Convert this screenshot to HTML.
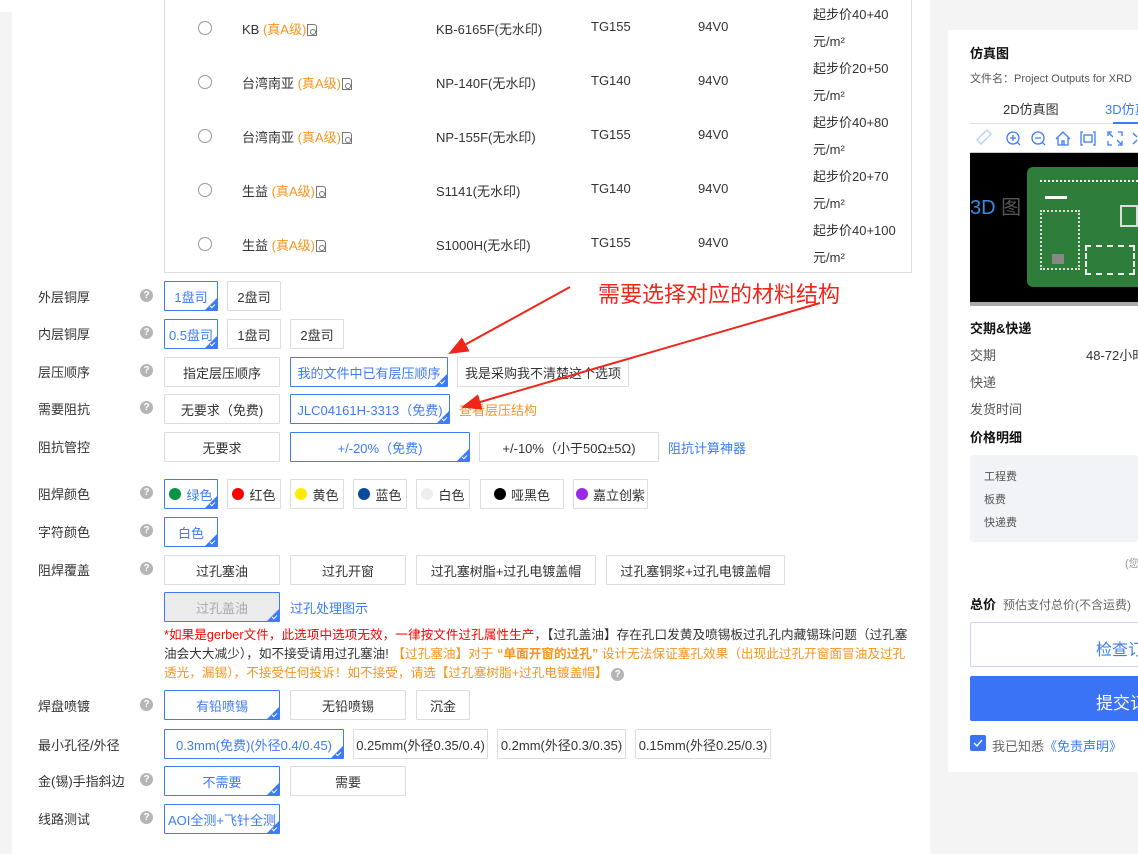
<!DOCTYPE html>
<html><head><meta charset="utf-8">
<style>
*{margin:0;padding:0;box-sizing:border-box}
body{width:1138px;height:854px;position:relative;overflow:hidden;background:#fff;font-family:"Liberation Sans","Noto Sans CJK SC",sans-serif;font-size:13px;color:#333}
.a{position:absolute;white-space:nowrap}
.b{position:absolute;height:30px;border:1px solid #dcdcdc;background:#fff;display:flex;align-items:center;justify-content:center;font-size:13px;color:#333;border-radius:1px}
.s{border-color:#3d7bf7;color:#3d7bf7}
.s::after{content:"";position:absolute;right:0;bottom:0;border-style:solid;border-width:0 0 12px 12px;border-color:transparent transparent #3d7bf7 transparent}
.s::before{content:"";position:absolute;right:2px;bottom:3px;width:4px;height:2px;border-left:1px solid #fff;border-bottom:1px solid #fff;transform:rotate(-45deg);z-index:2}
.l{position:absolute;left:38px;font-size:13px;color:#333}
.q{position:absolute;left:140px;width:13px;height:13px;border-radius:50%;background:#b5b5b5;color:#fff;font-size:10px;font-weight:bold;text-align:center;line-height:13px}
.r{position:absolute;left:198px;width:14px;height:14px;border:1px solid #999;border-radius:50%}
.or{color:#f7941d}
.dot{display:inline-block;width:12px;height:12px;border-radius:50%;margin-right:5px}
.pdf{display:inline-block;width:10px;height:12px;border:1px solid #777;border-top-right-radius:3px;margin-left:1px;vertical-align:-2px;position:relative}
.pdf::after{content:"";position:absolute;left:2px;top:4px;width:4px;height:4px;border:1px solid #777;border-radius:50%}
</style></head><body>
<div class="a" style="left:0;top:12px;width:12px;height:842px;background:#f4f4f4"></div>
<div class="a" style="left:930px;top:0;width:18px;height:854px;background:#f4f4f4"></div>
<div class="a" style="left:948px;top:0;width:190px;height:30px;background:#f4f4f4"></div>
<div class="a" style="left:948px;top:772px;width:190px;height:82px;background:#f4f4f4"></div>
<!-- table -->
<div class="a" style="left:164px;top:0;width:748px;height:273px;border:1px solid #ddd;border-top:none"></div>
<div class="r" style="top:21px"></div><div class="r" style="top:75px"></div><div class="r" style="top:129px"></div><div class="r" style="top:183px"></div><div class="r" style="top:237px"></div>
<div class="a" style="left:242px;top:19px">KB <span class="or">(真A级)</span><span class="pdf"></span></div>
<div class="a" style="left:242px;top:73px">台湾南亚 <span class="or">(真A级)</span><span class="pdf"></span></div>
<div class="a" style="left:242px;top:127px">台湾南亚 <span class="or">(真A级)</span><span class="pdf"></span></div>
<div class="a" style="left:242px;top:181px">生益 <span class="or">(真A级)</span><span class="pdf"></span></div>
<div class="a" style="left:242px;top:235px">生益 <span class="or">(真A级)</span><span class="pdf"></span></div>
<div class="a" style="left:436px;top:19px">KB-6165F(无水印)</div>
<div class="a" style="left:436px;top:73px">NP-140F(无水印)</div>
<div class="a" style="left:436px;top:127px">NP-155F(无水印)</div>
<div class="a" style="left:436px;top:181px">S1141(无水印)</div>
<div class="a" style="left:436px;top:235px">S1000H(无水印)</div>
<div class="a" style="left:591px;top:19px">TG155</div><div class="a" style="left:591px;top:73px">TG140</div><div class="a" style="left:591px;top:127px">TG155</div><div class="a" style="left:591px;top:181px">TG140</div><div class="a" style="left:591px;top:235px">TG155</div>
<div class="a" style="left:698px;top:19px">94V0</div><div class="a" style="left:698px;top:73px">94V0</div><div class="a" style="left:698px;top:127px">94V0</div><div class="a" style="left:698px;top:181px">94V0</div><div class="a" style="left:698px;top:235px">94V0</div>
<div class="a" style="left:813px;top:1px;line-height:27px">起步价40+40<br>元/m²<br>起步价20+50<br>元/m²<br>起步价40+80<br>元/m²<br>起步价20+70<br>元/m²<br>起步价40+100<br>元/m²</div>
<div class="a" style="left:813px;top:0;width:98px;height:6px;background:#fff"></div>

<!-- labels -->
<div class="l" style="top:287px">外层铜厚</div><div class="q" style="top:289px">?</div>
<div class="l" style="top:324px">内层铜厚</div><div class="q" style="top:326px">?</div>
<div class="l" style="top:362px">层压顺序</div><div class="q" style="top:364px">?</div>
<div class="l" style="top:399px">需要阻抗</div><div class="q" style="top:401px">?</div>
<div class="l" style="top:437px">阻抗管控</div>
<div class="l" style="top:484px">阻焊颜色</div><div class="q" style="top:486px">?</div>
<div class="l" style="top:522px">字符颜色</div><div class="q" style="top:524px">?</div>
<div class="l" style="top:560px">阻焊覆盖</div><div class="q" style="top:562px">?</div>
<div class="l" style="top:696px">焊盘喷镀</div><div class="q" style="top:698px">?</div>
<div class="l" style="top:735px">最小孔径/外径</div>
<div class="l" style="top:771px">金(锡)手指斜边</div><div class="q" style="top:773px">?</div>
<div class="l" style="top:809px">线路测试</div><div class="q" style="top:811px">?</div>

<div class="b s" style="left:164px;top:281px;width:54px">1盘司</div>
<div class="b" style="left:227px;top:281px;width:54px">2盘司</div>
<div class="b s" style="left:164px;top:319px;width:54px">0.5盘司</div>
<div class="b" style="left:227px;top:319px;width:54px">1盘司</div>
<div class="b" style="left:290px;top:319px;width:54px">2盘司</div>
<div class="b" style="left:164px;top:357px;width:116px">指定层压顺序</div>
<div class="b s" style="left:290px;top:357px;width:158px">我的文件中已有层压顺序</div>
<div class="b" style="left:457px;top:357px;width:172px">我是采购我不清楚这个选项</div>
<div class="b" style="left:164px;top:394px;width:116px">无要求（免费)</div>
<div class="b s" style="left:290px;top:394px;width:160px">JLC04161H-3313（免费)</div>
<div class="a or" style="left:459px;top:400px">查看层压结构</div>
<div class="b" style="left:164px;top:432px;width:116px">无要求</div>
<div class="b s" style="left:290px;top:432px;width:180px">+/-20%（免费)</div>
<div class="b" style="left:479px;top:432px;width:180px">+/-10%（小于50Ω±5Ω)</div>
<div class="a" style="left:668px;top:438px;color:#3d7bf7">阻抗计算神器</div>

<div class="b s" style="left:164px;top:479px;width:54px"><span class="dot" style="background:#079345"></span>绿色</div>
<div class="b" style="left:227px;top:479px;width:54px"><span class="dot" style="background:#f00"></span>红色</div>
<div class="b" style="left:290px;top:479px;width:54px"><span class="dot" style="background:#ffea00"></span>黄色</div>
<div class="b" style="left:353px;top:479px;width:54px"><span class="dot" style="background:#0b4a9b"></span>蓝色</div>
<div class="b" style="left:416px;top:479px;width:54px"><span class="dot" style="background:#eee"></span>白色</div>
<div class="b" style="left:480px;top:479px;width:84px"><span class="dot" style="background:#000"></span>哑黑色</div>
<div class="b" style="left:573px;top:479px;width:75px"><span class="dot" style="background:#9b27e8"></span>嘉立创紫</div>
<div class="b s" style="left:164px;top:517px;width:54px">白色</div>

<div class="b" style="left:164px;top:555px;width:116px">过孔塞油</div>
<div class="b" style="left:290px;top:555px;width:116px">过孔开窗</div>
<div class="b" style="left:416px;top:555px;width:180px">过孔塞树脂+过孔电镀盖帽</div>
<div class="b" style="left:606px;top:555px;width:179px">过孔塞铜浆+过孔电镀盖帽</div>
<div class="b s" style="left:164px;top:592px;width:116px;background:#ebebeb;border-color:#3d7bf7;color:#aaa">过孔盖油</div>
<div class="a" style="left:290px;top:598px;color:#3d7bf7">过孔处理图示</div>
<div class="a" style="left:164px;top:626px;line-height:19px;white-space:normal;width:748px;font-size:12.6px;letter-spacing:0.05px"><span style="color:#f00">*如果是gerber文件，此选项中选项无效，一律按文件过孔属性生产，</span>【过孔盖油】存在孔口发黄及喷锡板过孔孔内藏锡珠问题（过孔塞油会大大减少），如不接受请用过孔塞油! <span class="or">【过孔塞油】对于 <b>“单面开窗的过孔”</b> 设计无法保证塞孔效果（出现此过孔开窗面冒油及过孔透光，漏锡），不接受任何投诉！如不接受，请选【过孔塞树脂+过孔电镀盖帽】</span> <span style="display:inline-block;width:13px;height:13px;border-radius:50%;background:#b5b5b5;color:#fff;font-size:10px;text-align:center;line-height:13px;font-weight:bold">?</span></div>

<div class="b s" style="left:164px;top:690px;width:116px">有铅喷锡</div>
<div class="b" style="left:290px;top:690px;width:116px">无铅喷锡</div>
<div class="b" style="left:416px;top:690px;width:54px">沉金</div>
<div class="b s" style="left:164px;top:729px;width:180px">0.3mm(免费)(外径0.4/0.45)</div>
<div class="b" style="left:353px;top:729px;width:135px">0.25mm(外径0.35/0.4)</div>
<div class="b" style="left:497px;top:729px;width:129px">0.2mm(外径0.3/0.35)</div>
<div class="b" style="left:635px;top:729px;width:136px">0.15mm(外径0.25/0.3)</div>
<div class="b s" style="left:164px;top:766px;width:116px">不需要</div>
<div class="b" style="left:290px;top:766px;width:116px">需要</div>
<div class="b s" style="left:164px;top:804px;width:116px">AOI全测+飞针全测</div>

<!-- annotation -->
<svg class="a" style="left:0;top:0" width="930" height="854">
<defs><marker id="m" markerWidth="10" markerHeight="8" refX="9" refY="4" orient="auto"><path d="M0,0 L10,4 L0,8 z" fill="#f0261b"/></marker></defs>
<line x1="570" y1="287" x2="450" y2="353" stroke="#f0261b" stroke-width="2" marker-end="url(#m)"/>
<line x1="820" y1="303" x2="463" y2="407" stroke="#f0261b" stroke-width="2" marker-end="url(#m)"/>
</svg>
<div class="a" style="left:598px;top:277px;font-size:22px;color:#f0261b">需要选择对应的材料结构</div>

<!-- right panel -->
<div class="a" style="left:970px;top:43px;font-size:13px;font-weight:bold;color:#111">仿真图</div>
<div class="a" style="left:970px;top:70px;font-size:11px;color:#555">文件名：Project Outputs for XRD</div>
<div class="a" style="left:1003px;top:99px;font-size:13px;color:#333">2D仿真图</div>
<div class="a" style="left:1105px;top:99px;font-size:13px;color:#3d7bf7">3D仿真</div>
<div class="a" style="left:970px;top:123px;width:168px;height:1px;background:#ddd"></div>
<div class="a" style="left:1113px;top:122px;width:25px;height:2px;background:#3d7bf7"></div>
<svg class="a" style="left:975px;top:128px" width="163" height="22" fill="none" stroke="#3d7bf7" stroke-width="1.3">
<g stroke="#b8d0f8"><rect x="6" y="2" width="6" height="14" transform="rotate(45 9 9)"/></g>
<circle cx="38" cy="10" r="6"/><path d="M35 10h6M38 7v6M42 14l3 3"/>
<circle cx="63" cy="10" r="6"/><path d="M60 10h6M67 14l3 3"/>
<path d="M81 11l7-7 7 7M83 10v7h10v-7M87 17v-4h2v4"/>
<path d="M108 4h-2v13h2M118 4h2v13h-2"/><rect x="109" y="7" width="8" height="7"/>
<path d="M133 8v-4h4M147 8v-4h-4M133 13v4h4M147 13v4h-4M134 5l4 4M146 16l-4-4"/>
<path d="M158 5l4 4M158 16l4-4"/>
</svg>
<div class="a" style="left:970px;top:152px;width:168px;height:1px;background:#ccc"></div>
<div class="a" style="left:970px;top:153px;width:168px;height:149px;background:#000"></div>
<div class="a" style="left:1027px;top:167px;width:111px;height:120px;background:#2e7d3a;border-radius:6px 0 0 6px"></div>
<div class="a" style="left:1040px;top:180px;width:98px;height:5px;border-top:2px dotted #fff"></div>
<div class="a" style="left:1045px;top:196px;width:22px;height:3px;background:#fff"></div>
<div class="a" style="left:1040px;top:210px;width:40px;height:60px;border:2px dotted #ddd"></div>
<div class="a" style="left:1085px;top:245px;width:50px;height:30px;border:2px dashed #eee"></div>
<div class="a" style="left:1120px;top:205px;width:18px;height:22px;border:2px solid #ddd"></div>
<div class="a" style="left:1052px;top:254px;width:12px;height:10px;background:#888"></div>
<div class="a" style="left:970px;top:191px;font-size:20px;color:#3d8ae0">3D <span style="color:#555">图</span></div>
<div class="a" style="left:970px;top:302px;width:168px;height:4px;background:#aaa"></div>
<div class="a" style="left:970px;top:318px;font-weight:bold;color:#111">交期&amp;快递</div>
<div class="a" style="left:970px;top:345px;color:#555">交期</div>
<div class="a" style="left:1086px;top:345px;color:#333">48-72小时</div>
<div class="a" style="left:970px;top:372px;color:#555">快递</div>
<div class="a" style="left:970px;top:399px;color:#555">发货时间</div>
<div class="a" style="left:970px;top:427px;font-weight:bold;color:#111">价格明细</div>
<div class="a" style="left:970px;top:455px;width:168px;height:87px;background:#f2f3f6;border-radius:3px"></div>
<div class="a" style="left:984px;top:468px;font-size:11px;color:#555">工程费</div>
<div class="a" style="left:984px;top:491px;font-size:11px;color:#555">板费</div>
<div class="a" style="left:984px;top:514px;font-size:11px;color:#555">快递费</div>
<div class="a" style="left:1125px;top:555px;font-size:11px;color:#999">(您</div>
<div class="a" style="left:970px;top:594px;font-weight:bold;color:#111">总价 <span style="font-weight:normal;color:#666;font-size:12px">&nbsp;预估支付总价(不含运费)</span></div>
<div class="a" style="left:970px;top:622px;width:170px;height:45px;border:1px solid #c9d7f6;border-radius:2px"></div>
<div class="a" style="left:1096px;top:636px;font-size:16px;color:#3d7bf7">检查订</div>
<div class="a" style="left:970px;top:676px;width:170px;height:45px;background:#3a73f5;border-radius:2px"></div>
<div class="a" style="left:1096px;top:689px;font-size:17px;color:#fff">提交订</div>
<div class="a" style="left:970px;top:735px;width:16px;height:16px;background:#3a73f5;border-radius:2px"><svg width="16" height="16"><path d="M4 8l3 3 5-6" fill="none" stroke="#fff" stroke-width="1.4"/></svg></div>
<div class="a" style="left:992px;top:736px;color:#666">我已知悉<span style="color:#3d7bf7">《免责声明》</span></div>
</body></html>
